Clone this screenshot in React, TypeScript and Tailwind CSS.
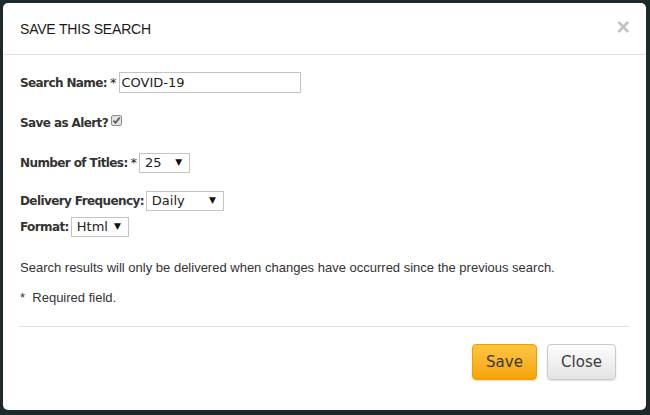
import { useState } from "react";

const label = "font-['DejaVu_Sans',Verdana,sans-serif] text-[12px] font-bold text-[#333] tracking-[-0.6px]";
const field = "font-['DejaVu_Sans',Verdana,sans-serif] text-[13px] text-[#222]";

const Select = ({ value, width }: { value: string; width: string }) => (
  <div
    className={`flex items-center justify-between h-[20px] ${width} border border-[#c4c4c4] bg-white pl-[5px] pr-[7px] ${field}`}
  >
    <span>{value}</span>
    <span className="text-[9px] text-[#111]">▼</span>
  </div>
);

const App = () => {
  const [name, setName] = useState("COVID-19");
  const [alert, setAlert] = useState(true);

  return (
    <div className="w-[650px] h-[415px] bg-[#1c292d] p-[3px] pb-[5px] overflow-hidden">
      <div className="w-[643px] h-[407px] bg-white rounded-[5px] flex flex-col">
        {/* HEADER */}
        <div className="h-[52px] flex items-center justify-between pl-[17px] pr-[16px] border-b border-[#e3e3e3]">
          <h1 className="font-['Liberation_Sans',Arial,sans-serif] text-[14px] text-[#1a1a1a] tracking-[-0.2px] mt-[1px]">
            SAVE THIS SEARCH
          </h1>
          <span className="font-['Liberation_Sans',Arial,sans-serif] text-[23px] font-bold leading-none text-[#c2c2c2] mb-[2px]">
            ×
          </span>
        </div>

        {/* BODY */}
        <div className="px-[17px] flex flex-col">
          <div className="mt-[17px] h-[21px] flex items-center">
            <span className={label}>Search Name:</span>
            <span className={`${field} text-[11px] ml-[3px] mr-[2px]`}>*</span>
            <input
              value={name}
              onChange={(e) => setName(e.target.value)}
              className={`w-[182px] h-[21px] border border-[#c4c4c4] px-[2px] outline-none ${field}`}
            />
          </div>

          <div className="mt-[19px] h-[21px] flex items-center">
            <span className={label}>Save as Alert?</span>
            <button
              onClick={() => setAlert(!alert)}
              className="ml-[3px] mb-[4px] w-[11px] h-[11px] border border-[#8f8f8f] bg-[#e2e2e2] rounded-[2px] flex items-center justify-center"
            >
              {alert && (
                <svg viewBox="0 0 10 10" className="w-[9px] h-[9px]">
                  <path d="M1.5 5.2 L4 7.6 L8.6 1.8" fill="none" stroke="#555" strokeWidth="1.8" />
                </svg>
              )}
            </button>
          </div>

          <div className="mt-[19px] h-[21px] flex items-center">
            <span className={label}>Number of Titles:</span>
            <span className={`${field} text-[11px] ml-[3px] mr-[2px]`}>*</span>
            <Select value="25" width="w-[51px]" />
          </div>

          <div className="mt-[17px] h-[21px] flex items-center">
            <span className={label}>Delivery Frequency:</span>
            <div className="ml-[2px]">
              <Select value="Daily" width="w-[78px]" />
            </div>
          </div>

          <div className="mt-[5px] h-[21px] flex items-center">
            <span className={label}>Format:</span>
            <div className="ml-[2px]">
              <Select value="Html" width="w-[58px]" />
            </div>
          </div>

          <p className="mt-[23px] font-['Liberation_Sans',Arial,sans-serif] text-[13px] leading-[16px] text-[#333]">
            Search results will only be delivered when changes have occurred since the previous search.
          </p>

          <p className="mt-[14px] font-['Liberation_Sans',Arial,sans-serif] text-[13px] leading-[16px] text-[#333]">
            *&nbsp; Required field.
          </p>
        </div>

        {/* FOOTER */}
        <div className="mx-[16px] mt-[20px] border-t border-[#e3e3e3]" />
        <div className="flex justify-end gap-[10px] pr-[30px] mt-[17px]">
          <button className="w-[65px] h-[36px] rounded-[4px] border border-[#e8a200] bg-gradient-to-b from-[#fdc53f] to-[#f6a400] font-['DejaVu_Sans',Verdana,sans-serif] text-[15px] text-[#3a3a3a] shadow-[0_1px_2px_rgba(0,0,0,0.15)]">
            Save
          </button>
          <button className="w-[69px] h-[36px] rounded-[4px] border border-[#c9c9c9] bg-gradient-to-b from-[#fdfdfd] to-[#e4e4e4] font-['DejaVu_Sans',Verdana,sans-serif] text-[15px] text-[#3a3a3a] shadow-[0_1px_2px_rgba(0,0,0,0.12)]">
            Close
          </button>
        </div>
      </div>
    </div>
  );
};

export default App;
